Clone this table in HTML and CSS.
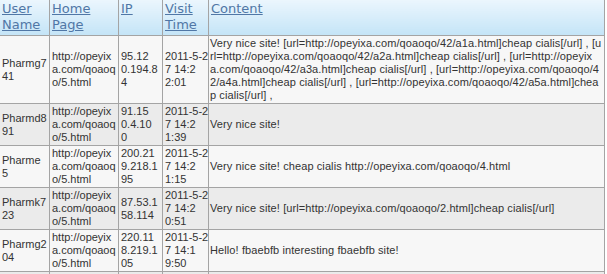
FILE: index.html
```html
<!DOCTYPE html>
<html>
<head>
<meta charset="utf-8">
<link rel="stylesheet" href="styles.css">
</head>
<body>
<table class="log">
  <colgroup>
    <col class="c-user"><col class="c-home"><col class="c-ip"><col class="c-time"><col class="c-content">
  </colgroup>
  <thead>
    <tr>
      <th><a href="#">User Name</a></th>
      <th><a href="#">Home Page</a></th>
      <th><a href="#">IP</a></th>
      <th><a href="#">Visit Time</a></th>
      <th><a href="#">Content</a></th>
    </tr>
  </thead>
  <tbody>
    <tr class="odd">
      <td>Pharmg7<br>41</td>
      <td>http://opeyix<br>a.com/qoaoq<br>o/5.html</td>
      <td>95.12<br>0.194.8<br>4</td>
      <td>2011-5-2<br>7 14:2<br>2:01</td>
      <td class="content">Very nice site! [url=http://opeyixa.com/qoaoqo/42/a1a.html]cheap cialis[/url] , [u<br>rl=http://opeyixa.com/qoaoqo/42/a2a.html]cheap cialis[/url] , [url=http://opeyix<br>a.com/qoaoqo/42/a3a.html]cheap cialis[/url] , [url=http://opeyixa.com/qoaoqo/4<br>2/a4a.html]cheap cialis[/url] , [url=http://opeyixa.com/qoaoqo/42/a5a.html]chea<br>p cialis[/url] ,</td>
    </tr>
    <tr class="even">
      <td>Pharmd8<br>91</td>
      <td>http://opeyix<br>a.com/qoaoq<br>o/5.html</td>
      <td>91.15<br>0.4.10<br>0</td>
      <td>2011-5-2<br>7 14:2<br>1:39</td>
      <td class="content">Very nice site!</td>
    </tr>
    <tr class="odd">
      <td>Pharme<br>5</td>
      <td>http://opeyix<br>a.com/qoaoq<br>o/5.html</td>
      <td>200.21<br>9.218.1<br>95</td>
      <td>2011-5-2<br>7 14:2<br>1:15</td>
      <td class="content">Very nice site! cheap cialis http://opeyixa.com/qoaoqo/4.html</td>
    </tr>
    <tr class="even">
      <td>Pharmk7<br>23</td>
      <td>http://opeyix<br>a.com/qoaoq<br>o/5.html</td>
      <td>87.53.1<br>58.114</td>
      <td>2011-5-2<br>7 14:2<br>0:51</td>
      <td class="content">Very nice site! [url=http://opeyixa.com/qoaoqo/2.html]cheap cialis[/url]</td>
    </tr>
    <tr class="odd">
      <td>Pharmg2<br>04</td>
      <td>http://opeyix<br>a.com/qoaoq<br>o/5.html</td>
      <td>220.11<br>8.219.1<br>05</td>
      <td>2011-5-2<br>7 14:1<br>9:50</td>
      <td class="content">Hello! fbaebfb interesting fbaebfb site!</td>
    </tr>
    <tr class="even filler">
      <td></td>
      <td></td>
      <td></td>
      <td></td>
      <td></td>
    </tr>
  </tbody>
</table>
</body>
</html>
```
FILE: styles.css
```css
body {
  margin: 0;
  background: #ffffff;
}

.log {
  border-collapse: collapse;
  table-layout: fixed;
  width: 605px;
  margin-left: -1px;
  font-family: "Liberation Sans", Arial, sans-serif;
  font-size: 11px;
  color: #333333;
}

.c-user { width: 50px; }
.c-home { width: 69px; }
.c-ip { width: 44px; }
.c-time { width: 46px; }
.c-content { width: 396px; }

.log th,
.log td {
  border: 1px solid #a4a4a4;
}

.log th {
  border-top: 0;
  height: 33px;
  padding: 1px 2px;
  text-align: left;
  vertical-align: top;
  font-family: "DejaVu Sans", Verdana, sans-serif;
  font-size: 13px;
  line-height: 16px;
  font-weight: normal;
  background: linear-gradient(#ebf6fd, #c4e4f7);
}

.log th a {
  color: #5077a6;
  text-decoration: underline;
}

.log td {
  padding: 1px 1px 1px 2px;
  line-height: 13px;
  vertical-align: middle;
  word-break: break-all;
  white-space: nowrap;
}

.log td.content {
  padding-left: 1px;
  letter-spacing: 0.1px;
}

.log tr.filler td {
  height: 40px;
}

.log tr.odd td {
  background: #f7f7f7;
}

.log tr.even td {
  background: #ebebeb;
}
```
